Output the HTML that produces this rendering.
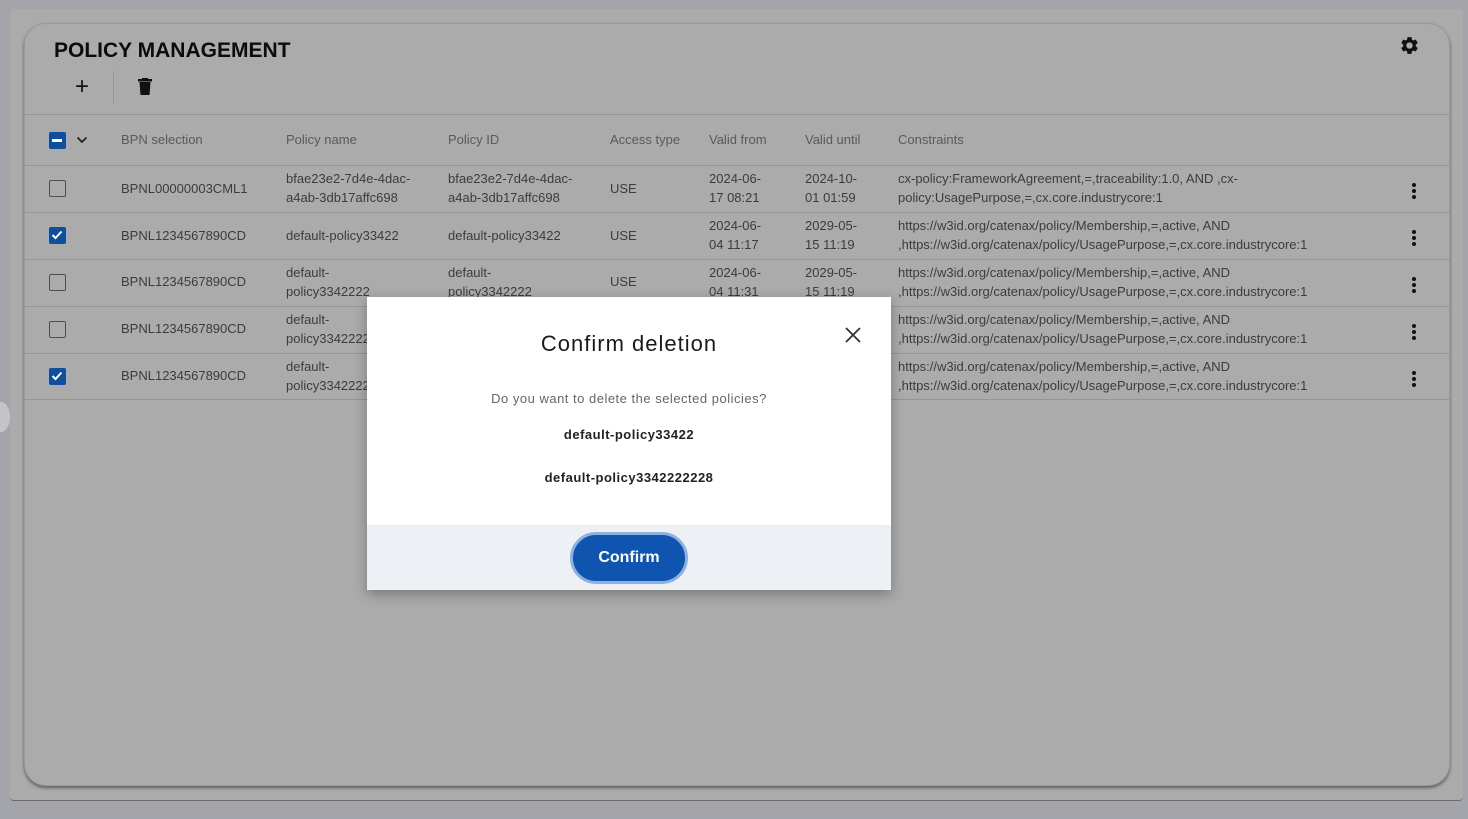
<!DOCTYPE html>
<html><head><meta charset="utf-8"><style>
*{margin:0;padding:0;box-sizing:border-box}
body{width:1468px;height:819px;background:#a4a5ab;font-family:"Liberation Sans",sans-serif;position:relative;overflow:hidden;color:#3c3c3c}
.outer{position:absolute;left:10px;top:9px;width:1453px;height:792px;background:#ababab;border-radius:4px;border-bottom:1px solid #6a6a6a}
.card{position:absolute;left:24px;top:23px;width:1426px;height:763px;background:#ababab;border-radius:22px;box-shadow:0 2px 3px rgba(0,0,0,.45);border:1px solid #9a9a9a}
.t{position:absolute;font-size:13px;line-height:19px;white-space:nowrap}
.h{color:#5a5a5a;font-size:13px}
.line{position:absolute;left:25px;width:1425px;height:1px;background:#959595}
.cb{position:absolute;left:49px;width:17px;height:17px;border:1.5px solid #505050;border-radius:2px}
.cb.on{background:#0e4e9c;border-color:#0e4e9c}
.kb{position:absolute;left:1412px;width:4px}
.kb i{display:block;width:4px;height:4px;border-radius:50%;background:#111;margin-bottom:2px}
.dlg{position:absolute;left:367px;top:297px;width:524px;height:293px;background:#fff;box-shadow:0 4px 12px rgba(0,0,0,.3)}
.foot{position:absolute;left:0;bottom:0;width:524px;height:65px;background:#edf0f4}
.btn{position:absolute;left:203px;top:7px;width:118px;height:52px;border-radius:26px;background:#0f55b0;border:3px solid #8eb2e0;color:#fff;font-weight:bold;font-size:16px;text-align:center;line-height:46px}
.c{position:absolute;left:0;width:524px;text-align:center}
</style></head><body>
<div class="outer"></div>
<div class="card"></div>
<div style="position:absolute;left:-8px;top:402px;width:18px;height:30px;border-radius:50%;background:#c4c5c9"></div>
<div class="t" style="left:54px;top:38px;font-size:21px;line-height:26px;color:#0c0c0c;font-weight:bold">POLICY MANAGEMENT</div>
<div class="t" style="left:75px;top:74px;font-size:24px;color:#111;line-height:26px">+</div>
<div style="position:absolute;left:113px;top:71px;width:1px;height:33px;background:#999"></div>
<svg style="position:absolute;left:138px;top:78px" width="14" height="18" viewBox="0 0 14 18"><rect x="0" y="1" width="14" height="2.5" fill="#111"/><rect x="4" y="0" width="6" height="2" fill="#111"/><path d="M1.5 4h11l-1 13h-9z" fill="#111"/></svg>
<svg style="position:absolute;left:1399px;top:35px" width="21" height="21" viewBox="0 0 24 24"><path fill="#111" d="M19.14 12.94c.04-.3.06-.61.06-.94 0-.32-.02-.64-.07-.94l2.030-1.58a.49.49 0 0 0 .12-.61l-1.92-3.32a.488.488 0 0 0-.59-.22l-2.39.96c-.5-.38-1.03-.7-1.62-.94l-.36-2.54a.484.484 0 0 0-.48-.41h-3.84c-.24 0-.43.17-.47.41l-.36 2.54c-.59.24-1.130.57-1.62.94l-2.39-.96c-.22-.08-.47 0-.59.22L2.74 8.87c-.12.21-.08.47.12.61l2.03 1.58c-.05.3-.09.63-.09.94s.02.64.07.94l-2.03 1.58a.49.49 0 0 0-.12.61l1.92 3.32c.12.22.37.29.59.22l2.39-.96c.5.38 1.03.7 1.62.94l.36 2.54c.05.24.24.41.48.41h3.84c.24 0 .44-.17.47-.41l.36-2.54c.59-.24 1.13-.56 1.62-.94l2.39.96c.22.08.47 0 .59-.22l1.92-3.32c.12-.22.07-.47-.12-.61l-2.01-1.58zM12 15.6c-1.98 0-3.6-1.62-3.6-3.6s1.62-3.6 3.6-3.6 3.6 1.62 3.6 3.6-1.62 3.6-3.6 3.6z"/></svg>
<div class="line" style="top:114px"></div>
<div class="cb on" style="top:132px"><div style="position:absolute;left:2px;top:6px;width:10px;height:2.5px;background:#fff"></div></div>
<svg style="position:absolute;left:76px;top:135px" width="12" height="10"><path d="M1.5 2.5l4.5 4.5 4.5-4.5" stroke="#222" stroke-width="1.8" fill="none"/></svg>
<div class="t h" style="left:121px;top:130px">BPN selection</div>
<div class="t h" style="left:286px;top:130px">Policy name</div>
<div class="t h" style="left:448px;top:130px">Policy ID</div>
<div class="t h" style="left:610px;top:130px">Access type</div>
<div class="t h" style="left:709px;top:130px">Valid from</div>
<div class="t h" style="left:805px;top:130px">Valid until</div>
<div class="t h" style="left:898px;top:130px">Constraints</div>
<div class="line" style="top:165px"></div>
<div class="line" style="top:212px"></div>
<div class="line" style="top:259px"></div>
<div class="line" style="top:306px"></div>
<div class="line" style="top:353px"></div>
<div class="line" style="top:399px"></div>

<div class="cb" style="top:180px"></div>
<div class="t" style="left:121px;top:179px">BPNL00000003CML1</div>
<div class="t" style="left:286px;top:169px">bfae23e2-7d4e-4dac-<br>a4ab-3db17affc698</div>
<div class="t" style="left:448px;top:169px">bfae23e2-7d4e-4dac-<br>a4ab-3db17affc698</div>
<div class="t" style="left:610px;top:179px">USE</div>
<div class="t" style="left:709px;top:169px">2024-06-<br>17 08:21</div>
<div class="t" style="left:805px;top:169px">2024-10-<br>01 01:59</div>
<div class="t" style="left:898px;top:169px">cx-policy:FrameworkAgreement,=,traceability:1.0, AND ,cx-<br>policy:UsagePurpose,=,cx.core.industrycore:1</div>
<div class="kb" style="top:183px"><i></i><i></i><i></i></div>

<div class="cb on" style="top:227px"><svg width="14" height="14" style="position:absolute;left:0;top:0"><path d="M2.5 7l3 3 6-6.5" stroke="#fff" stroke-width="2" fill="none"/></svg></div>
<div class="t" style="left:121px;top:226px">BPNL1234567890CD</div>
<div class="t" style="left:286px;top:226px">default-policy33422</div>
<div class="t" style="left:448px;top:226px">default-policy33422</div>
<div class="t" style="left:610px;top:226px">USE</div>
<div class="t" style="left:709px;top:216px">2024-06-<br>04 11:17</div>
<div class="t" style="left:805px;top:216px">2029-05-<br>15 11:19</div>
<div class="t" style="left:898px;top:216px">https://w3id.org/catenax/policy/Membership,=,active, AND<br>,https://w3id.org/catenax/policy/UsagePurpose,=,cx.core.industrycore:1</div>
<div class="kb" style="top:230px"><i></i><i></i><i></i></div>

<div class="cb" style="top:274px"></div>
<div class="t" style="left:121px;top:272px">BPNL1234567890CD</div>
<div class="t" style="left:286px;top:263px">default-<br>policy3342222</div>
<div class="t" style="left:448px;top:263px">default-<br>policy3342222</div>
<div class="t" style="left:610px;top:272px">USE</div>
<div class="t" style="left:709px;top:263px">2024-06-<br>04 11:31</div>
<div class="t" style="left:805px;top:263px">2029-05-<br>15 11:19</div>
<div class="t" style="left:898px;top:263px">https://w3id.org/catenax/policy/Membership,=,active, AND<br>,https://w3id.org/catenax/policy/UsagePurpose,=,cx.core.industrycore:1</div>
<div class="kb" style="top:277px"><i></i><i></i><i></i></div>

<div class="cb" style="top:321px"></div>
<div class="t" style="left:121px;top:319px">BPNL1234567890CD</div>
<div class="t" style="left:286px;top:310px">default-<br>policy3342222</div>
<div class="t" style="left:898px;top:310px">https://w3id.org/catenax/policy/Membership,=,active, AND<br>,https://w3id.org/catenax/policy/UsagePurpose,=,cx.core.industrycore:1</div>
<div class="kb" style="top:324px"><i></i><i></i><i></i></div>

<div class="cb on" style="top:368px"><svg width="14" height="14" style="position:absolute;left:0;top:0"><path d="M2.5 7l3 3 6-6.5" stroke="#fff" stroke-width="2" fill="none"/></svg></div>
<div class="t" style="left:121px;top:366px">BPNL1234567890CD</div>
<div class="t" style="left:286px;top:357px">default-<br>policy3342222</div>
<div class="t" style="left:898px;top:357px">https://w3id.org/catenax/policy/Membership,=,active, AND<br>,https://w3id.org/catenax/policy/UsagePurpose,=,cx.core.industrycore:1</div>
<div class="kb" style="top:371px"><i></i><i></i><i></i></div>

<div class="dlg">
<svg style="position:absolute;left:477px;top:29px" width="18" height="18"><path d="M2 2l14 14M16 2L2 16" stroke="#333" stroke-width="1.8"/></svg>
<div class="c" style="top:34px;font-size:22px;color:#1a1a1a;letter-spacing:1px">Confirm deletion</div>
<div class="c" style="top:94px;font-size:13px;color:#666;letter-spacing:.5px">Do you want to delete the selected policies?</div>
<div class="c" style="top:130px;font-size:13px;color:#222;font-weight:bold;letter-spacing:.5px">default-policy33422</div>
<div class="c" style="top:173px;font-size:13px;color:#222;font-weight:bold;letter-spacing:.5px">default-policy3342222228</div>
<div class="foot"><div class="btn">Confirm</div></div>
</div>
</body></html>
